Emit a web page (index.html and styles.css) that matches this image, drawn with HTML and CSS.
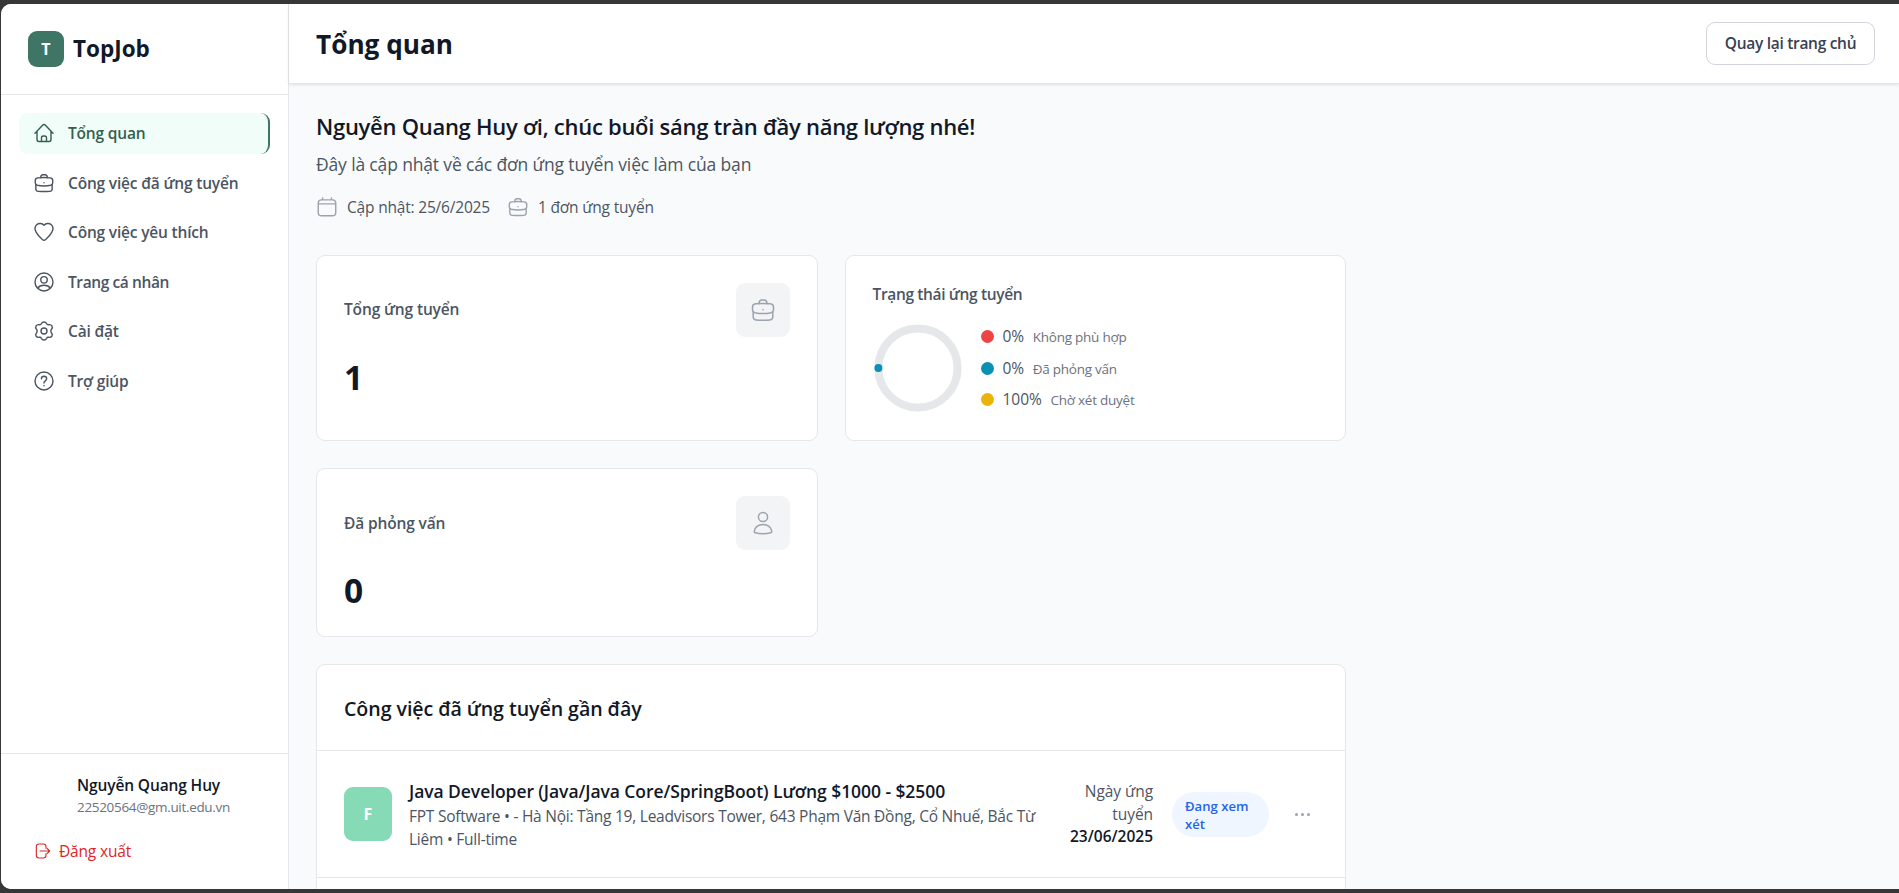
FILE: index.html
```html
<!DOCTYPE html>
<html lang="vi">
<head>
<meta charset="utf-8">
<title>TopJob – Tổng quan</title>
<link rel="stylesheet" href="styles.css">
</head>
<body>
<svg class="sprite" width="0" height="0">
  <symbol id="briefcase" viewBox="0 0 24 24"><path d="M8 5.600C8.100 3 9.200 2 10.700 2h2.600C14.800 2 15.900 3 16 5.600"/><path d="M1.500 9.200C1.500 7 2.600 6 4.600 5.800c4.900-.4 9.900-.4 14.800 0 2 .2 3.100 1.200 3.100 3.400v2.600c0 1.600-.8 2.500-2.400 2.900-5.400 1.200-10.800 1.200-16.200 0-1.600-.4-2.400-1.300-2.400-2.900z"/><path d="M2.200 14.200v4.600c0 2.100.9 3 2.800 3.200 4.700.4 9.300.4 14 0 1.900-.2 2.800-1.100 2.800-3.200v-4.600M12 11.600v.1"/></symbol>
  <symbol id="person" viewBox="0 0 24 24"><circle cx="12" cy="6" r="4.600"/><path d="M3.300 20.400C3.600 16.200 7.200 13.400 12 13.400s8.400 2.800 8.700 7c.1.900-.2 1.200-.9 1.400-5 1.300-10.600 1.300-15.600 0-.7-.2-1-.5-.9-1.400z"/></symbol>
</svg>
<div class="app">
  <aside class="sidebar">
    <div class="brand"><span class="brand-mark">T</span><span class="brand-name">TopJob</span></div>
    <nav class="nav">
      <a class="nav-item active"><svg class="icon" viewBox="0 0 24 24"><path d="M1.200 12.400 10.300 2.700c1.200-1.200 2.200-1.200 3.400 0l9.100 9.700M3.600 10.200v9.700c0 1.600.7 2.300 2.300 2.300h12.200c1.600 0 2.300-.7 2.300-2.300v-9.700M9 22v-4.200c0-1.600.8-2.300 2.300-2.300h1.400c1.500 0 2.300.7 2.300 2.300V22"/></svg><span>Tổng quan</span></a>
      <a class="nav-item"><svg class="icon"><use href="#briefcase"/></svg><span>Công việc đã ứng tuyển</span></a>
      <a class="nav-item"><svg class="icon" viewBox="0 0 24 24"><path d="M12 4C14 1.500 18.200 1.100 20.800 3.300c2.400 2.200 2.300 6 .5 9.200-1.800 3.300-4.800 6.300-7.300 8.500-1.400 1.200-2.600 1.200-4 0C7.500 18.800 4.500 15.800 2.700 12.500.9 9.300.8 5.500 3.200 3.300 5.800 1.100 10 1.500 12 4z"/></svg><span>Công việc yêu thích</span></a>
      <a class="nav-item tight"><svg class="icon" viewBox="0 0 24 24"><circle cx="12" cy="12" r="10.800"/><circle cx="12" cy="9.400" r="3.900"/><path d="M4.300 19.200c1.700-2.300 4.300-3.400 7.700-3.400s6 1.100 7.700 3.400"/></svg><span>Trang cá nhân</span></a>
      <a class="nav-item"><svg class="icon" viewBox="0 0 24 24"><circle cx="12" cy="12" r="3.600"/><path d="M8.800 3.300C9.500 1.700 10.300 1.200 12 1.200s2.500.5 3.200 2.100c.4 1 1.200 1.400 2.300 1.200 1.800-.3 3.200-.1 4 1.300s.8 2.600-.4 3.900c-1.100 1-1.100 3.600 0 4.600 1.200 1.300 1.200 2.500.4 3.900s-2.200 1.600-4 1.300c-1.100-.2-1.900.2-2.300 1.200-.7 1.600-1.500 2.100-3.200 2.100s-2.500-.5-3.200-2.100c-.4-1-1.200-1.400-2.300-1.200-1.800.3-3.200.1-4-1.300s-.8-2.600.4-3.900c1.100-1 1.100-3.600 0-4.600-1.200-1.300-1.200-2.500-.4-3.900s2.200-1.600 4-1.300c1.100.2 1.900-.2 2.300-1.200z"/></svg><span>Cài đặt</span></a>
      <a class="nav-item"><svg class="icon" viewBox="0 0 24 24"><circle cx="12" cy="12" r="10.800"/><path d="M8.900 9.300C8.900 7.300 10.200 6.200 12 6.200s3.200 1.100 3.200 2.900c0 2.700-3.200 2.700-3.200 5.200M12 17.300v.3"/></svg><span>Trợ giúp</span></a>
    </nav>
    <div class="account">
      <div class="account-name">Nguyễn Quang Huy</div>
      <div class="account-mail">22520564@gm.uit.edu.vn</div>
      <a class="logout"><svg class="icon" viewBox="0 0 24 24"><path d="M16.500 8V5.500c0-2.700-1.200-4-3.900-4H6C3.300 1.500 2 2.800 2 5.500v13c0 2.700 1.300 4 4 4h6.600c2.700 0 3.900-1.300 3.900-4V16M7.500 12H22M18.500 8.500 22 12l-3.500 3.500"/></svg><span>Đăng xuất</span></a>
    </div>
  </aside>
  <div class="page">
    <header class="topbar"><h1 class="title">Tổng quan</h1><button class="home-button">Quay lại trang chủ</button></header>
    <main class="content">
      <h2 class="greeting">Nguyễn Quang Huy ơi, chúc buổi sáng tràn đầy năng lượng nhé!</h2>
      <p class="intro">Đây là cập nhật về các đơn ứng tuyển việc làm của bạn</p>
      <div class="meta">
        <span class="meta-item"><svg class="icon" viewBox="0 0 24 24"><path d="M1.500 7.500C1.500 4.500 2.800 3.400 5.500 3.400h13c2.700 0 4 1.100 4 4.100v11c0 2.700-1.300 4-4 4h-13c-2.700 0-4-1.300-4-4zM1.500 8.200h21M6.700 1v2.400M17.300 1v2.400"/></svg><span>Cập nhật: 25/6/2025</span></span>
        <span class="meta-item"><svg class="icon"><use href="#briefcase"/></svg><span>1 đơn ứng tuyển</span></span>
      </div>
      <div class="stats">
        <section class="card stat total"><div class="stat-head"><span class="label">Tổng ứng tuyển</span><span class="tile"><svg class="icon"><use href="#briefcase"/></svg></span></div><div class="number">1</div></section>
        <section class="card status">
          <div class="label">Trạng thái ứng tuyển</div>
          <div class="chart">
            <svg class="donut" viewBox="0 0 90 90"><circle class="track" cx="45" cy="45" r="39.600"/><circle class="point" cx="5.400" cy="45" r="4"/></svg>
            <ul class="legend">
              <li><i class="dot red"></i><b>0%</b><small>Không phù hợp</small></li>
              <li><i class="dot cyan"></i><b>0%</b><small>Đã phỏng vấn</small></li>
              <li><i class="dot yellow"></i><b>100%</b><small>Chờ xét duyệt</small></li>
            </ul>
          </div>
        </section>
        <section class="card stat"><div class="stat-head"><span class="label">Đã phỏng vấn</span><span class="tile"><svg class="icon"><use href="#person"/></svg></span></div><div class="number">0</div></section>
      </div>
      <section class="card recent">
        <h3 class="recent-title">Công việc đã ứng tuyển gần đây</h3>
        <div class="job">
          <span class="logo">F</span>
          <div class="job-info">
            <div class="job-name">Java Developer (Java/Java Core/SpringBoot) Lương $1000 - $2500</div>
            <div class="job-place">FPT Software • - Hà Nội: Tầng 19, Leadvisors Tower, 643 Phạm Văn Đồng, Cổ Nhuế, Bắc Từ<br>Liêm • Full-time</div>
          </div>
          <div class="job-date">Ngày ứng<br>tuyển<br><strong>23/06/2025</strong></div>
          <span class="badge">Đang xem<br>xét</span>
          <span class="more"><i></i><i></i><i></i></span>
        </div>
      </section>
    </main>
  </div>
</div>
</body>
</html>
```
FILE: styles.css
```css
* { box-sizing: border-box; }
html, body { height: 100%; }
body { margin: 0; padding: 4px 0 4px 1px; overflow: hidden; background: #373737; color: #111827; font: 15.500px/22.500px "Open Sans", "Noto Sans", sans-serif; }
h1, h2, h3, p, ul { margin: 0; padding: 0; }
.sprite { display: block; position: absolute; }
.icon { width: 20px; height: 20px; flex: none; fill: none; stroke: currentColor; stroke-width: 1.700; stroke-linecap: round; stroke-linejoin: round; overflow: visible; }
.app { display: flex; height: 885px; overflow: hidden; background: #f9fafb; border-radius: 10px 0 0 10px; }
.sidebar { display: flex; flex-direction: column; width: 288px; flex: none; background: #fff; border-right: 1px solid #e5e7eb; }
.brand { display: flex; align-items: center; gap: 9px; height: 91px; padding: 0 27px; border-bottom: 1px solid #e5e7eb; }
.brand-mark { display: grid; place-items: center; width: 36px; height: 36px; border-radius: 9px; background: #3e7564; color: #fff; font-size: 16px; font-weight: 700; }
.brand-name { font-size: 22.500px; font-weight: 700; }
.nav { display: flex; flex-direction: column; gap: 9px; padding: 18px; }
.nav-item { display: flex; align-items: center; gap: 14px; height: 40.500px; padding: 0 15px; border-radius: 9px; color: #4b5563; font-weight: 600; letter-spacing: -.18px; }
.nav-item.tight { letter-spacing: -.39px; }
.nav-item.active { background: #f0fdf9; color: #35604f; border-right: 2px solid #3e7564; }
.account { margin-top: auto; height: 136px; border-top: 1px solid #e5e7eb; padding: 20px 34px 0; }
.account-name { margin-left: 42px; font-weight: 600; line-height: 23px; letter-spacing: -.12px; }
.account-mail { margin-left: 42px; color: #6b7280; font-size: 13.500px; line-height: 20px; letter-spacing: -.32px; }
.logout { display: flex; align-items: center; gap: 8px; margin-top: 23px; color: #dc2626; letter-spacing: -.17px; }
.logout .icon { width: 16px; height: 16px; }
.page { flex: 1; min-width: 0; }
.topbar { display: flex; align-items: center; justify-content: space-between; height: 80px; padding: 0 24px 0 27px; background: #fff; border-bottom: 1px solid #e5e7eb; box-shadow: 0 1px 3px #0000001a; }
.title { padding-top: 1px; font-size: 26.200px; line-height: 36px; }
.home-button { height: 43px; width: 169px; padding: 0; border: 1px solid #d1d5db; border-radius: 9px; background: #fff; color: #374151; font: inherit; font-weight: 600; letter-spacing: -.29px; }
.content { width: 1084px; padding: 27px; }
.greeting { font-size: 22px; font-weight: 600; line-height: 31.500px; letter-spacing: -.27px; }
.intro { margin-top: 8.500px; color: #4b5563; font-size: 17.500px; line-height: 27px; letter-spacing: -.15px; }
.meta { display: flex; gap: 18px; margin: 18px 0 36px 1px; color: #4b5563; letter-spacing: -.19px; }
.meta-item { display: flex; align-items: center; gap: 10px; }
.meta .icon, .tile .icon { color: #9ca3af; }
.stats { display: grid; grid-template-columns: 1fr 1fr; gap: 27px; }
.card { background: #fff; border: 1px solid #e5e7eb; border-radius: 9px; }
.stat, .status { padding: 27px; }
.stat { height: 169px; }
.stat.total { height: 186px; }
.stat-head { display: flex; align-items: center; justify-content: space-between; }
.label { color: #4b5563; font-weight: 600; letter-spacing: -.14px; }
.status .label { letter-spacing: -.35px; }
.tile { display: grid; place-items: center; width: 54px; height: 54px; border-radius: 9px; background: #f3f4f6; }
.tile .icon { width: 24px; height: 24px; stroke-width: 1.500; }
.number { margin-top: 20px; font-size: 33.500px; font-weight: 700; line-height: 40.500px; }
.chart { display: flex; align-items: center; gap: 18px; margin-top: 18px; }
.donut { width: 90px; height: 90px; fill: none; }
.track { stroke: #e5e7eb; stroke-width: 8; }
.point { fill: #0891b2; }
.legend { list-style: none; display: grid; gap: 9px; }
.legend li { display: flex; align-items: center; height: 22.500px; }
.legend b { margin: 0 8.500px 0 9px; font-weight: 400; color: #4b5563; }
.legend small { padding-top: 2px; color: #6b7280; font-size: 13.500px; letter-spacing: -.24px; }
.dot { width: 13px; height: 13px; border-radius: 50%; }
.red { background: #ef4444; }
.cyan { background: #0891b2; }
.yellow { background: #eab308; }
.recent { margin-top: 27px; height: 300px; }
.recent-title { height: 86px; padding: 28px 27px 26px; border-bottom: 1px solid #e5e7eb; font-size: 19.600px; font-weight: 600; line-height: 32px; letter-spacing: -.06px; }
.job { display: flex; align-items: center; height: 127px; padding: 0 27px; border-bottom: 1px solid #e5e7eb; }
.logo { display: grid; place-items: center; width: 48px; height: 54px; border-radius: 9px; background: #86dab5; color: #fff; font-size: 16px; font-weight: 700; }
.job-info { width: 645px; margin-left: 17px; white-space: nowrap; }
.job-name { font-size: 17.500px; font-weight: 600; line-height: 27px; letter-spacing: -.07px; }
.job-place { color: #4b5563; letter-spacing: -.24px; }
.job-date { width: 99px; text-align: right; color: #4b5563; white-space: nowrap; letter-spacing: -.06px; }
.job-date strong { color: #111827; font-weight: 600; letter-spacing: 0; }
.badge { width: 97px; height: 45px; margin-left: 19px; padding: 5px 13px; border-radius: 23px; background: #eff6ff; color: #2563eb; font-size: 13.100px; font-weight: 600; line-height: 18px; }
.more { display: flex; gap: 3px; margin-left: 26px; }
.more i { width: 3px; height: 3px; border-radius: 50%; background: #9ca3af; }
```
